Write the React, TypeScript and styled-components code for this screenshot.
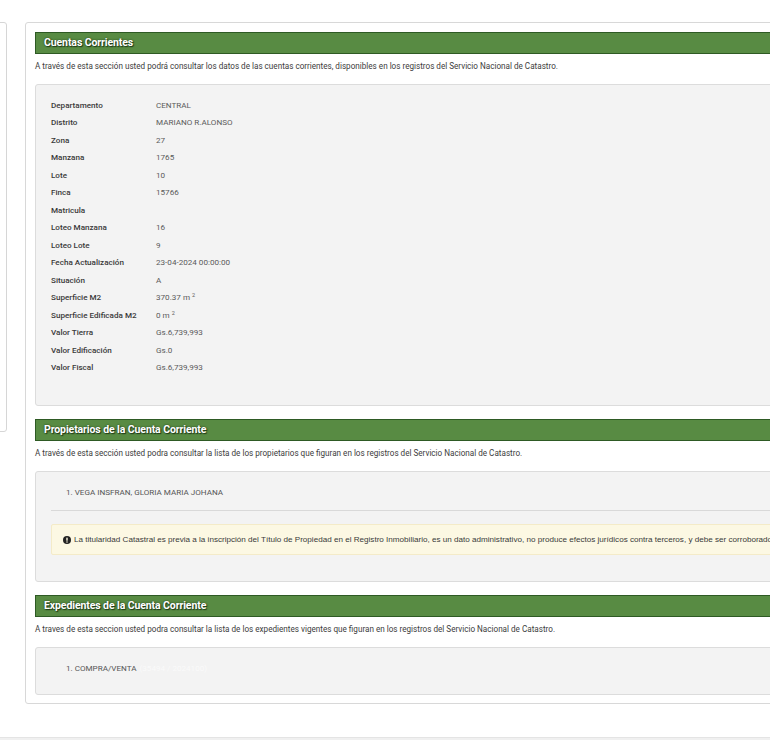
import React from "react";
import styled, { createGlobalStyle } from "styled-components";

const Global = createGlobalStyle`
  html, body { margin: 0; padding: 0; background: #fff; overflow: hidden; }
  body { font-family: Roboto, "Liberation Sans", Arial, sans-serif; color: #333; }
`;

const Page = styled.div`
  width: 770px;
  height: 740px;
  overflow: hidden;
  display: flex;
  flex-direction: column;
`;

const Content = styled.div`
  display: flex;
  align-items: flex-start;
  gap: 18px;
  padding-top: 22px;
  height: 715px;
`;

const SidePanel = styled.div`
  width: 200px;
  margin-left: -193px;
  height: 410px;
  border: 1px solid #d6d6d6;
  border-radius: 3px;
  box-sizing: border-box;
  flex-shrink: 0;
`;

const Card = styled.div`
  width: 900px;
  flex-shrink: 0;
  border: 1px solid #d8d8d8;
  border-radius: 3px;
  padding: 9px 9px 8px 9px;
  box-sizing: border-box;
`;

const Heading = styled.div`
  height: 22px;
  box-sizing: border-box;
  background: #588b43;
  border: 1px solid #2e5a24;
  color: #fff;
  font-weight: 700;
  font-size: 10.5px;
  line-height: 20px;
  padding-left: 8px;
  text-shadow: 0 0 2px #1f3b18, 1px 1px 1px #1f3b18;
  letter-spacing: -0.1px;
`;

const Section = styled.section<{ $gap?: number }>`
  margin-top: ${(p) => p.$gap ?? 0}px;
`;

const Desc = styled.p`
  margin: 7px 0 0 0;
  font-size: 8.15px;
  line-height: 10px;
  color: #3c3c3c;
  white-space: nowrap;
`;

const Well = styled.div<{ $pt: number; $h: number }>`
  margin-top: 13px;
  background: #f3f3f3;
  border: 1px solid #dcdcdc;
  border-radius: 3px;
  padding: ${(p) => p.$pt}px 0 0 15px;
  box-sizing: border-box;
  height: ${(p) => p.$h}px;
`;

const DataGrid = styled.div`
  display: grid;
  grid-template-columns: 105px 1fr;
  grid-auto-rows: 17.5px;
  align-items: center;
  font-size: 8.1px;
`;

const Label = styled.div`
  font-weight: 500;
  color: #3a3a3a;
`;

const Value = styled.div`
  color: #5a5a5a;
`;

const Sup = styled.sup`
  font-size: 5.5px;
  vertical-align: 3px;
  line-height: 0;
`;

const ListItem = styled.div`
  padding-left: 15px;
  font-size: 8.1px;
  line-height: 12px;
  color: #555;
  white-space: nowrap;
`;

const Link = styled.span`
  color: #fafafa;
  margin-left: 3px;
`;

const Rule = styled.hr`
  border: 0;
  border-top: 1px solid #d9d9d9;
  margin: 12px 0 0 0;
`;

const Alert = styled.div`
  margin-top: 13px;
  height: 31px;
  box-sizing: border-box;
  background: #fcf8e3;
  border: 1px solid #f4ebc8;
  border-radius: 2px;
  display: flex;
  align-items: center;
  gap: 3px;
  padding-left: 11px;
  font-family: "Liberation Sans", Arial, sans-serif;
  font-size: 8.1px;
  color: #3a3a3a;
  white-space: nowrap;
`;

const Footer = styled.div`
  flex: 1;
  background: #f0f0f0;
  border-top: 1px solid #e4e4e4;
`;

const rows: [string, React.ReactNode][] = [
  ["Departamento", "CENTRAL"],
  ["Distrito", "MARIANO R.ALONSO"],
  ["Zona", "27"],
  ["Manzana", "1765"],
  ["Lote", "10"],
  ["Finca", "15766"],
  ["Matricula", ""],
  ["Loteo Manzana", "16"],
  ["Loteo Lote", "9"],
  ["Fecha Actualización", "23-04-2024 00:00:00"],
  ["Situación", "A"],
  ["Superficie M2", <>370.37 m <Sup>2</Sup></>],
  ["Superficie Edificada M2", <>0 m <Sup>2</Sup></>],
  ["Valor Tierra", "Gs.6,739,993"],
  ["Valor Edificación", "Gs.0"],
  ["Valor Fiscal", "Gs.6,739,993"],
];

const AlertIcon = () => (
  <svg width="8" height="8" viewBox="0 0 16 16">
    <circle cx="8" cy="8" r="8" fill="#222" />
    <rect x="6.6" y="3" width="2.8" height="6.5" rx="1" fill="#fcf8e3" />
    <circle cx="8" cy="12.2" r="1.5" fill="#fcf8e3" />
  </svg>
);

export default function App() {
  return (
    <Page>
      <Global />
      <Content>
        <SidePanel />
        <Card>
          <Section>
            <Heading>Cuentas Corrientes</Heading>
            <Desc>
              A través de esta sección usted podrá consultar los datos de las cuentas corrientes, disponibles en los registros del Servicio Nacional de Catastro.
            </Desc>
            <Well $pt={11} $h={322}>
              <DataGrid>
                {rows.map(([l, v]) => (
                  <React.Fragment key={l}>
                    <Label>{l}</Label>
                    <Value>{v}</Value>
                  </React.Fragment>
                ))}
              </DataGrid>
            </Well>
          </Section>
          <Section $gap={13}>
            <Heading>Propietarios de la Cuenta Corriente</Heading>
            <Desc>
              A través de esta sección usted podra consultar la lista de los propietarios que figuran en los registros del Servicio Nacional de Catastro.
            </Desc>
            <Well $pt={14} $h={111}>
              <ListItem>1. VEGA INSFRAN, GLORIA MARIA JOHANA</ListItem>
              <Rule />
              <Alert>
                <AlertIcon />
                <span>
                  La titularidad Catastral es previa a la inscripción del Título de Propiedad en el Registro Inmobiliario, es un dato administrativo, no produce efectos jurídicos contra terceros, y debe ser corroborado.
                </span>
              </Alert>
            </Well>
          </Section>
          <Section $gap={13}>
            <Heading>Expedientes de la Cuenta Corriente</Heading>
            <Desc>
              A traves de esta seccion usted podra consultar la lista de los expedientes vigentes que figuran en los registros del Servicio Nacional de Catastro.
            </Desc>
            <Well $pt={14} $h={48}>
              <ListItem>
                1. COMPRA/VENTA<Link>(35494 / 2024100)</Link>
              </ListItem>
            </Well>
          </Section>
        </Card>
      </Content>
      <Footer />
    </Page>
  );
}
